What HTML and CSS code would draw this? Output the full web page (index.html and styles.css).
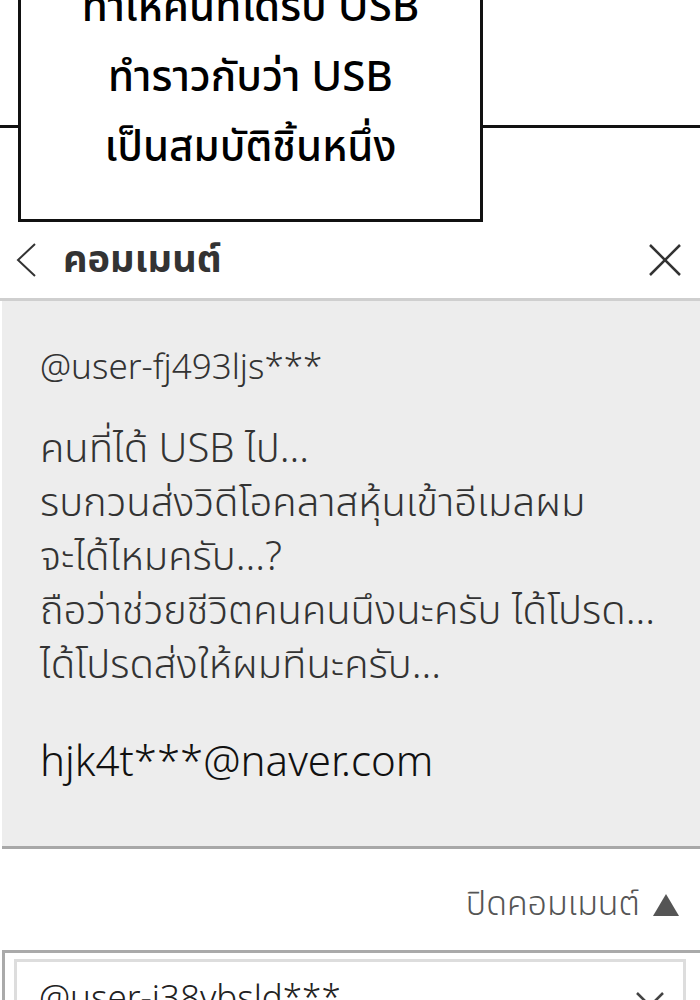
FILE: index.html
```html
<!DOCTYPE html>
<html lang="th">
<head>
    <meta charset="UTF-8">
    <meta name="viewport" content="width=device-width, initial-scale=1.0">
    <title>คอมเมนต์</title>
    <link rel="stylesheet" href="styles.css">
</head>
<body>
    <div class="comic">
        <div class="rule rule-left"></div>
        <div class="caption">
            <p>ทำให้คนที่ได้รับ USB</p>
            <p>ทำราวกับว่า USB</p>
            <p>เป็นสมบัติชิ้นหนึ่ง</p>
        </div>
        <div class="rule"></div>
    </div>

    <div class="topbar">
        <svg class="back" width="24" height="36" viewBox="0 0 24 36">
            <path d="M21 2 L4 18 L21 34" fill="none" stroke="#333" stroke-width="2"/>
        </svg>
        <h1>คอมเมนต์</h1>
        <svg class="close" width="34" height="34" viewBox="0 0 34 34">
            <path d="M2 2 L32 32 M32 2 L2 32" fill="none" stroke="#333" stroke-width="2.5"/>
        </svg>
    </div>

    <div class="comment">
        <div class="handle">@user-fj493ljs***</div>
        <div class="body">คนที่ได้ USB ไป...<br>รบกวนส่งวิดีโอคลาสหุ้นเข้าอีเมลผม<br>จะได้ไหมครับ...?<br>ถือว่าช่วยชีวิตคนคนนึงนะครับ ได้โปรด...<br>ได้โปรดส่งให้ผมทีนะครับ...</div>
        <div class="email">hjk4t***@naver.com</div>
    </div>

    <div class="toggle">
        <span>ปิดคอมเมนต์</span>
        <svg class="arrow" width="28" height="24" viewBox="0 0 28 24">
            <path d="M14 1 L27 23 L1 23 Z" fill="#555"/>
        </svg>
    </div>

    <div class="next">
        <div class="next-box">
            <span class="handle">@user-i38vbsld***</span>
            <svg class="down" width="30" height="18" viewBox="0 0 30 18">
                <path d="M2 2 L15 15 L28 2" fill="none" stroke="#444" stroke-width="2.5"/>
            </svg>
        </div>
    </div>
</body>
</html>
```

FILE: styles.css
```css
body {
    margin: 0;
    background: #fff;
    font-family: "Noto Sans Thai", "Noto Sans", "DejaVu Sans", sans-serif;
    color: #222;
    overflow: hidden;
}
.comic {
    display: flex;
    align-items: flex-start;
    height: 222px;
    overflow: hidden;
}
.rule {
    flex: 1;
    height: 3px;
    margin-top: 125px;
    background: #111;
}
.rule-left {
    flex: none;
    width: 18px;
}
.caption {
    width: 465px;
    height: 222px;
    box-sizing: border-box;
    border: 3px solid #111;
    border-top: none;
    display: flex;
    flex-direction: column;
    justify-content: flex-end;
    padding-bottom: 36px;
    text-align: center;
}
.caption p {
    margin: 0;
    font-size: 42px;
    font-weight: 500;
    line-height: 70px;
    color: #000;
    white-space: nowrap;
}
.topbar {
    display: flex;
    align-items: center;
    height: 76px;
    padding: 0 18px 0 14px;
    border-bottom: 3px solid #cfcfcf;
}
.topbar h1 {
    flex: 1;
    margin: 0 0 0 25px;
    font-size: 38px;
    font-weight: 700;
    color: #333;
}
.comment {
    background: #ededed;
    height: 548px;
    box-sizing: border-box;
    padding: 48px 10px 0 38px;
    border-bottom: 3px solid #a8a8a8;
    margin-left: 2px;
    white-space: nowrap;
}
.handle {
    font-size: 35px;
    font-weight: 300;
    line-height: 40px;
    color: #333;
}
.body {
    margin-top: 34px;
    font-size: 40px;
    font-weight: 300;
    line-height: 54px;
    color: #333;
}
.email {
    margin-top: 38px;
    font-size: 42px;
    font-weight: 300;
    color: #111;
}
.toggle {
    height: 101px;
    display: flex;
    align-items: center;
    justify-content: flex-end;
    gap: 12px;
    padding: 10px 20px 0 0;
    box-sizing: border-box;
    font-size: 34px;
    font-weight: 300;
    color: #555;
}
.next {
    margin-left: 2px;
    border-top: 3px solid #aaa;
    border-left: 3px solid #aaa;
    padding: 6px 14px 0 9px;
}
.next-box {
    display: flex;
    justify-content: space-between;
    align-items: center;
    background: #fff;
    border: 3px solid #ddd;
    border-bottom: none;
    padding: 18px 18px 20px 22px;
}
.next-box .handle {
    color: #222;
}
```
